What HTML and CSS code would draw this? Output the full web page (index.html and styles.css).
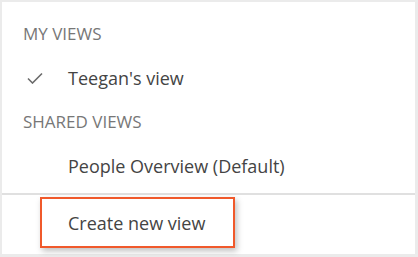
FILE: index.html
```html
<!DOCTYPE html>
<html lang="en">

<head>
    <meta charset="UTF-8">
    <meta name="viewport" content="width=device-width, initial-scale=1.0">
    <title>Views</title>
    <link rel="stylesheet" href="styles.css">
</head>

<body>
    <div class="panel">
        <ul class="view-list">
            <li class="group-title">My views</li>
            <li class="view-item selected">
                <span class="check">
                    <svg width="16" height="12" viewBox="0 0 16 12">
                        <path d="M1 6.5 L5.5 11 L15 1.5" fill="none" stroke="#6b6b6b" stroke-width="1.6" />
                    </svg>
                </span>
                Teegan's view
            </li>
            <li class="group-title">Shared views</li>
            <li class="view-item"><span class="check"></span>People Overview (Default)</li>
        </ul>
        <div class="footer">
            <button class="create-btn">Create new view</button>
        </div>
    </div>
</body>

</html>
```

FILE: styles.css
```css
* {
    margin: 0;
    padding: 0;
    box-sizing: border-box;
}

body {
    background: #ebebeb;
    padding: 2px 3px 3px 2px;
    font-family: 'Open Sans', 'Liberation Sans', sans-serif;
    overflow: hidden;
}

.panel {
    background: #fff;
    height: 252px;
}

.view-list {
    list-style: none;
    padding: 10px 0 5px;
    border-bottom: 2px solid #e0e0e0;
}

.group-title {
    height: 44px;
    line-height: 44px;
    padding-left: 21px;
    font-size: 17px;
    color: #777;
    text-transform: uppercase;
}

.view-item {
    display: flex;
    align-items: center;
    height: 44px;
    line-height: 44px;
    padding-left: 25px;
    font-size: 18px;
    color: #444;
}

.check {
    display: flex;
    align-items: center;
    width: 41px;
    height: 44px;
}

.footer {
    padding: 2px 0 0 38px;
}

.create-btn {
    display: block;
    width: 195px;
    height: 51px;
    padding-left: 26px;
    text-align: left;
    background: #fff;
    border: 2px solid #f0592b;
    box-shadow: 2px 3px 6px rgba(0, 0, 0, 0.25);
    font-family: inherit;
    font-size: 18px;
    color: #444;
}
```
